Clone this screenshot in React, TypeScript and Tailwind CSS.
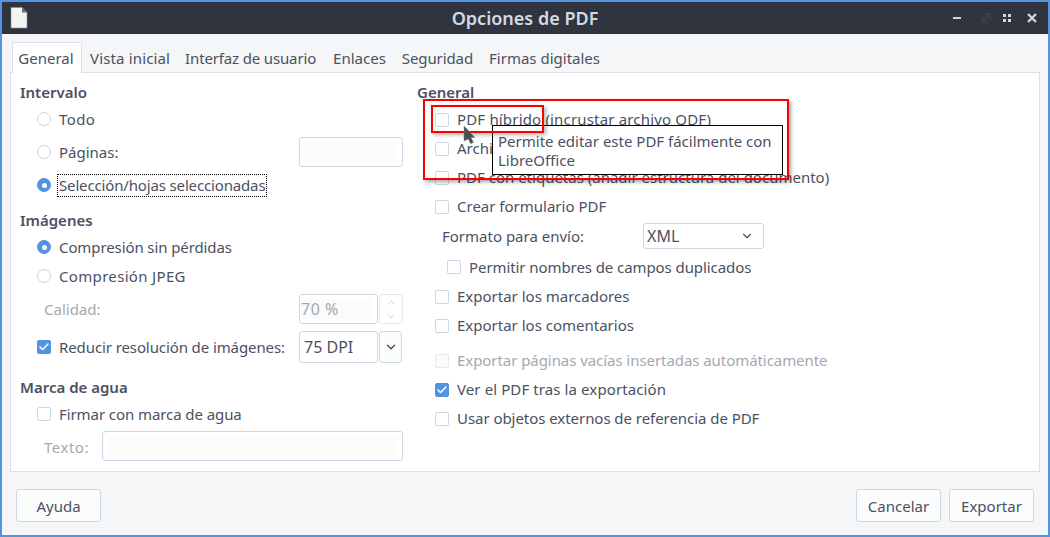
import React from "react";
import { Check, ChevronDown, ChevronUp } from "lucide-react";

const FONT = "font-['Noto_Sans','Liberation_Sans',sans-serif]";

const Box = ({ checked, disabled }: { checked?: boolean; disabled?: boolean }) => (
  <span
    className={`flex items-center justify-center w-[14px] h-[14px] rounded-[2px] border shrink-0 ${
      checked ? "bg-[#5294e2] border-[#5294e2]" : disabled ? "bg-[#fbfbfc] border-[#e6e8ee]" : "bg-white border-[#cfd6e6]"
    }`}
  >
    {checked && <Check size={12} strokeWidth={3} className="text-white" />}
  </span>
);

const Radio = ({ checked }: { checked?: boolean }) => (
  <span
    className={`flex items-center justify-center w-[14px] h-[14px] rounded-full border shrink-0 ${
      checked ? "bg-[#5294e2] border-[#5294e2]" : "bg-white border-[#cfd6e6]"
    }`}
  >
    {checked && <span className="w-[5px] h-[5px] rounded-full bg-white" />}
  </span>
);

const Heading = ({ children }: { children: React.ReactNode }) => (
  <div className="h-[24px] pt-[1px] flex items-center font-semibold text-[15px] text-[#4b5162]">{children}</div>
);

const OptionRow = ({
  h,
  control,
  label,
  muted,
  indent = "pl-[17px]",
  track = "",
}: {
  h: string;
  control: React.ReactNode;
  label: string;
  muted?: boolean;
  indent?: string;
  track?: string;
}) => (
  <div className={`flex items-center gap-[8px] ${h} ${indent}`}>
    {control}
    <span className={`${muted ? "text-[#a5a8b0]" : ""} ${track}`}>{label}</span>
  </div>
);

const Field = ({ className }: { className: string }) => (
  <div className={`rounded-[3px] border border-[#cfd6e6] bg-white p-[5px] ${className}`}>
    <div className="w-full h-full bg-[#fafbfb]" />
  </div>
);

const FooterButton = ({ label }: { label: string }) => (
  <button
    type="button"
    className="w-[85px] h-[33px] pt-[1px] rounded-[3px] border border-[#cfd6e6] bg-[#fbfcfc] text-[#4b5162]"
  >
    {label}
  </button>
);

const LeftColumn = () => (
  <div className="w-[397px] shrink-0 pl-[9px]">
    <Heading>Intervalo</Heading>
    <OptionRow h="h-[30px]" control={<Radio />} label="Todo" track="tracking-[0.4px]" />
    <div className="flex items-center justify-between h-[36px]">
      <OptionRow h="h-[36px]" control={<Radio />} label="Páginas:" />
      <Field className="w-[104px] h-[30px] mr-[5px]" />
    </div>
    <div className="flex items-center gap-[7px] h-[30px] pl-[17px]">
      <Radio checked />
      <span className="h-[21px] px-[1px] flex items-center outline-1 outline-dotted outline-black tracking-[-0.15px]">
        Selección/hojas seleccionadas
      </span>
    </div>

    <div className="mt-[8px]">
      <Heading>Imágenes</Heading>
    </div>
    <OptionRow h="h-[30px]" control={<Radio checked />} label="Compresión sin pérdidas" track="tracking-[-0.1px]" />
    <OptionRow h="h-[28px]" control={<Radio />} label="Compresión JPEG" track="tracking-[0.33px]" />
    <div className="flex items-center h-[38px] text-[#a5a8b0]">
      <span className="w-[279px] pl-[24px]">Calidad:</span>
      <div className="w-[79px] h-[30px] rounded-[3px] border border-[#cfd6e6] flex items-center pl-[1px] bg-white text-[16px]">
        <span className="bg-[#fafbfb] w-[71px] h-[20px] flex items-center tracking-[0.5px]">70 %</span>
      </div>
      <div className="ml-[1px] w-[24px] h-[30px] rounded-[3px] border border-[#e6e8ee] flex flex-col items-center justify-center text-[#c5c8ce]">
        <ChevronUp size={11} />
        <ChevronDown size={11} className="mt-[3px]" />
      </div>
    </div>
    <div className="flex items-center h-[38px]">
      <OptionRow
        h="h-[38px] w-[279px]"
        control={<Box checked />}
        label="Reducir resolución de imágenes:"
        track="tracking-[-0.1px]"
      />
      <div className="w-[79px] h-[32px] rounded-[3px] border border-[#cfd6e6] flex items-center pl-[4px] bg-white text-[16px]">
        75 DPI
      </div>
      <div className="ml-[1px] w-[23px] h-[32px] rounded-[3px] border border-[#cfd6e6] flex items-center justify-center bg-[#fbfcfc]">
        <ChevronDown size={14} strokeWidth={2.5} />
      </div>
    </div>

    <div className="mt-[9px]">
      <Heading>Marca de agua</Heading>
    </div>
    <OptionRow h="h-[30px]" control={<Box />} label="Firmar con marca de agua" track="tracking-[-0.08px]" />
    <div className="flex items-center h-[36px]">
      <span className="w-[82px] pl-[24px] text-[#a5a8b0] tracking-[0.5px]">Texto:</span>
      <Field className="w-[301px] h-[30px] mb-[2px]" />
    </div>
  </div>
);

const RightColumn = () => (
  <div className="flex-1 pl-[9px]">
    <Heading>General</Heading>
    <div className="mt-[1px]" />
    <OptionRow
      h="h-[29px]"
      indent="pl-[18px]"
      control={<Box />}
      label="PDF híbrido (incrustar archivo ODF)"
      track="tracking-[0.17px]"
    />
    <OptionRow h="h-[29px]" indent="pl-[18px]" control={<Box />} label="Archivado (PDF/A, ISO 19005)" />
    <OptionRow h="h-[29px]" indent="pl-[18px]" control={<Box />} label="PDF con etiquetas (añadir estructura del documento)" />
    <OptionRow h="h-[29px]" indent="pl-[18px]" control={<Box />} label="Crear formulario PDF" />
    <div className="flex items-center h-[31px] pl-[25px]">
      <span className="w-[201px]">Formato para envío:</span>
      <div className="w-[121px] h-[26px] mb-[2px] rounded-[3px] border border-[#cfd6e6] flex items-center justify-between pl-[3px] pr-[9px] bg-white text-[16px]">
        XML
        <ChevronDown size={14} strokeWidth={2} />
      </div>
    </div>
    <OptionRow
      h="h-[30px]"
      indent="pl-[30px]"
      control={<Box />}
      label="Permitir nombres de campos duplicados"
      track="tracking-[-0.08px]"
    />
    <OptionRow h="h-[29px]" indent="pl-[18px]" control={<Box />} label="Exportar los marcadores" />
    <OptionRow h="h-[29px]" indent="pl-[18px]" control={<Box />} label="Exportar los comentarios" />
    <div className="mt-[6px]" />
    <OptionRow
      h="h-[29px]"
      indent="pl-[18px]"
      control={<Box disabled />}
      label="Exportar páginas vacías insertadas automáticamente"
      muted
      track="tracking-[-0.06px]"
    />
    <OptionRow
      h="h-[29px]"
      indent="pl-[18px]"
      control={<Box checked />}
      label="Ver el PDF tras la exportación"
      track="tracking-[0.1px]"
    />
    <OptionRow
      h="h-[29px]"
      indent="pl-[18px]"
      control={<Box />}
      label="Usar objetos externos de referencia de PDF"
      track="tracking-[-0.05px]"
    />
  </div>
);

const TABS = [
  { label: "Vista inicial", cls: "ml-[8px] tracking-[0.15px]" },
  { label: "Interfaz de usuario", cls: "ml-[15px] tracking-[-0.15px]" },
  { label: "Enlaces", cls: "ml-[17px]" },
  { label: "Seguridad", cls: "ml-[16px] tracking-[-0.1px]" },
  { label: "Firmas digitales", cls: "ml-[16px]" },
];

export default function App() {
  return (
    <div className={`relative w-[1050px] h-[537px] border-2 border-[#5294e2] bg-[#f5f6f7] text-[#4b5162] text-[15px] overflow-hidden ${FONT}`}>
      {/* titlebar */}
      <div className="flex items-center justify-between h-[32px] bg-[#2f343f] pl-[8px] pr-[11px]">
        <div className="w-[103px]">
          <svg width="18" height="22" viewBox="0 0 18 22" className="block">
            <path d="M1 0.5h11l5 5v15.5H1z" fill="#f4f4f2" stroke="#8a8d93" strokeWidth="0.6" />
            <path d="M12 0.5l5 5h-5z" fill="#6b6e74" />
          </svg>
        </div>
        <div className="font-semibold text-[18px] text-[#d3dae3]">Opciones de PDF</div>
        <div className="w-[100px] flex items-center justify-end">
          <svg width="10" height="10" viewBox="0 0 10 10" className="mr-[19px]">
            <rect x="1" y="4" width="8" height="2" fill="#cfd5e0" />
          </svg>
          <svg width="10" height="10" viewBox="0 0 10 10" className="mr-[11px]">
            <path d="M1 9l8-8M3 1h6v6M1 3v6h6" fill="none" stroke="#3c414d" strokeWidth="1.5" />
          </svg>
          <svg width="10" height="10" viewBox="0 0 10 10" className="mr-[15px]">
            <path d="M1 1h3v3H1zM6 1h3v3H6zM1 6h3v3H1zM6 6h3v3H6z" fill="#cfd5e0" />
          </svg>
          <svg width="10" height="10" viewBox="0 0 10 10">
            <path d="M1 1l8 8M9 1l-8 8" stroke="#cfd5e0" strokeWidth="2.4" />
          </svg>
        </div>
      </div>

      {/* tabs */}
      <div className="flex items-end h-[38px] pl-[10px]">
        <div className="h-[31px] w-[70px] bg-white border border-b-0 border-[#dcdfe6] rounded-t-[2px] flex items-center justify-center relative top-[1px] pr-[2px] pt-[1px]">
          General
        </div>
        {TABS.map((t) => (
          <div key={t.label} className={`h-[30px] pt-[3px] flex items-center whitespace-nowrap ${t.cls}`}>
            {t.label}
          </div>
        ))}
      </div>

      {/* panel */}
      <div className="mx-[8px] w-[1030px] h-[400px] bg-white border border-[#dcdfe6] pt-[7px] flex">
        <LeftColumn />
        <RightColumn />
      </div>

      {/* footer */}
      <div className="flex justify-between mt-[17px] pl-[14px] pr-[14px]">
        <FooterButton label="Ayuda" />
        <div className="flex gap-[8px]">
          <FooterButton label="Cancelar" />
          <FooterButton label="Exportar" />
        </div>
      </div>

      {/* annotations over the dialog */}
      <div className="absolute left-[490px] top-[123px] w-[291px] h-[50px] bg-white border border-black px-[5px] pt-[6px] leading-[19px]">
        Permite editar este PDF fácilmente con
        <br />
        LibreOffice
      </div>
      <div className="absolute left-[421px] top-[97px] w-[366px] h-[81px] border-[2px] border-[#ff0000] shadow-[2px_2px_4px_rgba(0,0,0,0.35)]" />
      <div className="absolute left-[429px] top-[103px] w-[113px] h-[28px] border-[2px] border-[#ff0000] shadow-[2px_2px_4px_rgba(0,0,0,0.3)]" />
      <svg width="14" height="20" viewBox="0 0 14 20" className="absolute left-[461px] top-[123px]">
        <path d="M1 1l11 11.5H8l2.5 5-3 1.2L5.5 14 1 16z" fill="#4a4d52" stroke="#8b8d90" strokeWidth="0.5" />
      </svg>
    </div>
  );
}
